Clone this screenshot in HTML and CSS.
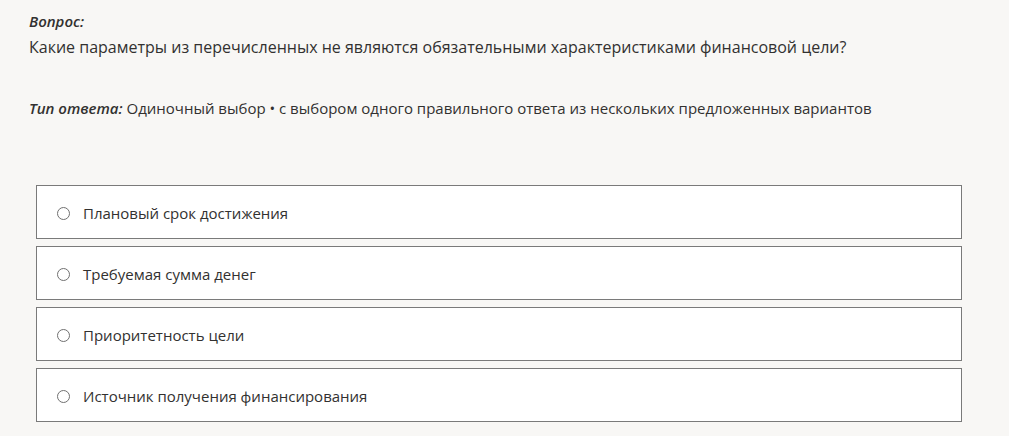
FILE: index.html
```html
<!DOCTYPE html>
<html>

<head>
  <title>Вопрос</title>
  <link rel="stylesheet" href="styles.css">
</head>

<body>
  <div class="question">
    <div class="question-label">Вопрос:</div>
    <div class="question-text">Какие параметры из перечисленных не являются обязательными характеристиками финансовой цели?</div>
  </div>

  <div class="answer-type">
    <span class="answer-type-label">Тип ответа:</span> Одиночный выбор • с выбором одного правильного ответа из нескольких предложенных вариантов
  </div>

  <!-- варианты ответа -->
  <div class="options">
    <label class="option">
      <input type="radio" name="answer" class="option-radio">
      <span>Плановый срок достижения</span>
    </label>
    <label class="option">
      <input type="radio" name="answer" class="option-radio">
      <span>Требуемая сумма денег</span>
    </label>
    <label class="option">
      <input type="radio" name="answer" class="option-radio">
      <span>Приоритетность цели</span>
    </label>
    <label class="option">
      <input type="radio" name="answer" class="option-radio">
      <span>Источник получения финансирования</span>
    </label>
  </div>
</body>

</html>
```

FILE: styles.css
```css
body {
  margin: 0;
  background-color: #f8f7f5;
  color: #323130;
  font-family: "Open Sans", "Noto Sans", sans-serif;
  padding: 11px 47px 0 29px;
}

.question-label {
  font-weight: 600;
  font-style: italic;
  font-size: 15px;
  line-height: 20px;
}

.question-text {
  font-size: 16px;
  line-height: 24px;
  margin-top: 4px;
}

.answer-type {
  font-size: 15px;
  line-height: 20px;
  margin-top: 39px;
}

.answer-type-label {
  font-weight: 600;
  font-style: italic;
}

.options {
  display: flex;
  flex-direction: column;
  gap: 7px;
  margin: 67px 0 0 7px;
}

.option {
  display: flex;
  align-items: center;
  box-sizing: border-box;
  height: 54px;
  background-color: #fff;
  border: 1px solid #7a7a7a;
  padding: 2px 0 0 20px;
  font-size: 15px;
  cursor: pointer;
}

.option-radio {
  appearance: none;
  width: 13px;
  height: 13px;
  margin: 0 13px 0 0;
  border: 1.5px solid #707070;
  border-radius: 50%;
  background: #fff;
}
```
